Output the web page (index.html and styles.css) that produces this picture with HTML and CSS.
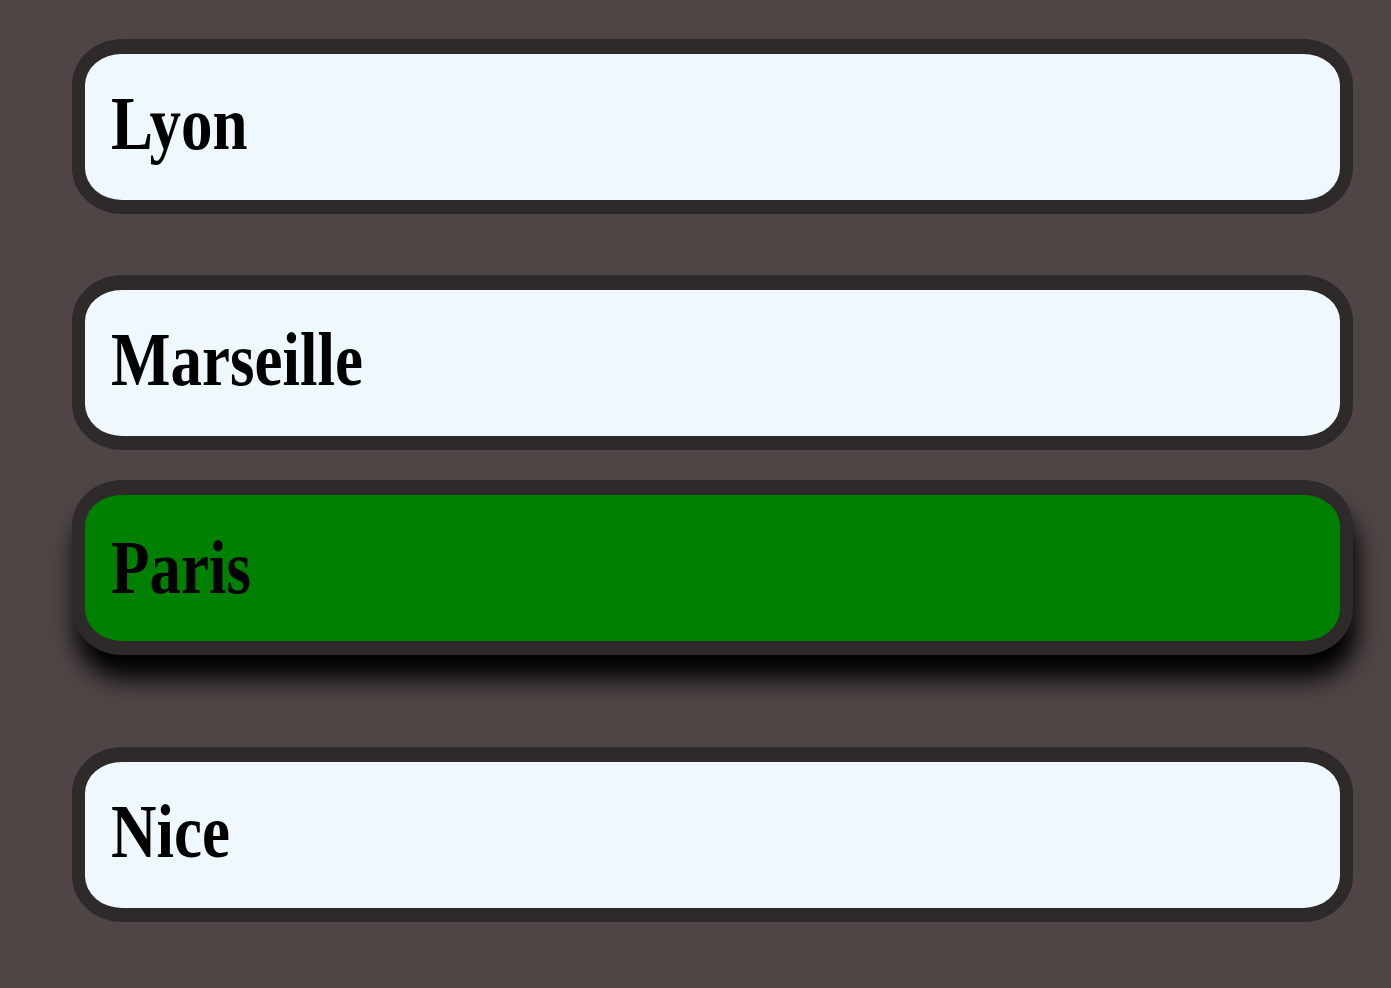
FILE: index.html
```html
<!DOCTYPE html>
<html lang="fr">
<head>
<meta charset="utf-8">
<title>Villes</title>
<link rel="stylesheet" href="styles.css">
</head>
<body>
<ul class="cities">
  <li class="city"><span class="label">Lyon</span></li>
  <li class="city"><span class="label">Marseille</span></li>
  <li class="city city--active"><span class="label">Paris</span></li>
  <li class="city"><span class="label">Nice</span></li>
</ul>
</body>
</html>
```
FILE: styles.css
```css
html, body {
  margin: 0;
  padding: 0;
  background: #4f4545;
}
body {
  width: 1391px;
  height: 988px;
  overflow: hidden;
}
.cities {
  list-style: none;
  margin: 0;
  padding: 39px 0 0 72px;
  display: flex;
  flex-direction: column;
  gap: 61px;
  width: 1281px;
}
.city {
  box-sizing: border-box;
  height: 175px;
  border-style: solid;
  border-color: #2f2a2a;
  border-width: 15px 13px 14px 13px;
  border-radius: 50px / 46px;
  background: #f0f8ff;
  display: flex;
  align-items: center;
  padding: 0 0 5px 26px;
  font-family: "Liberation Serif", "Times New Roman", serif;
  font-weight: bold;
  font-size: 63px;
  line-height: 1;
  color: #000;
}
.label {
  display: inline-block;
  transform: scaleY(1.2);
}
.city--active {
  background: #008000;
  transform: translateY(-31px);
  box-shadow: 4px 24px 24px #000;
  padding-bottom: 0;
}
```
